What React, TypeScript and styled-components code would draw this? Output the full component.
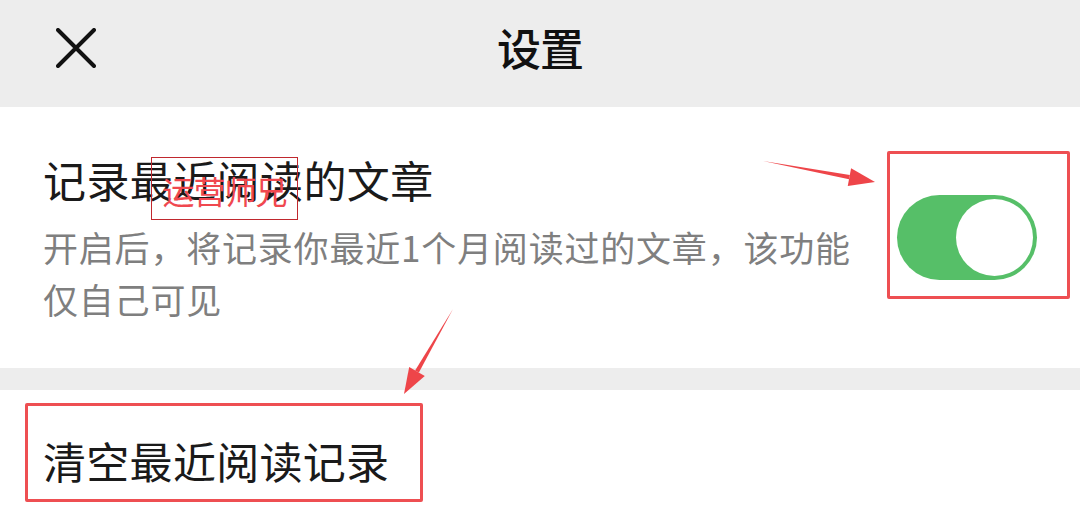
import React from "react";
import styled, { createGlobalStyle } from "styled-components";

const GlobalStyle = createGlobalStyle`
  html, body {
    margin: 0;
    padding: 0;
    background: #ededed;
  }
  body {
    font-family: "Noto Sans CJK SC", "Noto Sans", sans-serif;
    overflow: hidden;
  }
`;

const Page = styled.div`
  position: relative;
  width: 1080px;
  height: 515px;
  overflow: hidden;
  background: #ededed;
  display: flex;
  flex-direction: column;
  & > * {
    flex-shrink: 0;
  }
`;

const Header = styled.header`
  height: 107px;
  box-sizing: border-box;
  padding-bottom: 14px;
  display: grid;
  grid-template-columns: 1fr auto 1fr;
  align-items: center;
  background: #ededed;
`;

const CloseButton = styled.div`
  padding-left: 56px;
  padding-top: 3px;
  display: flex;
  align-items: center;
  color: #111;
`;

const HeaderTitle = styled.h1`
  margin: 0;
  font-size: 44px;
  line-height: 52px;
  font-weight: 500;
  color: #111;
  letter-spacing: -1px;
`;

const Section = styled.section<{ $height: number }>`
  background: #fff;
  height: ${(p) => p.$height}px;
  box-sizing: border-box;
  position: relative;
`;

const SettingRow = styled.div`
  height: 100%;
  display: flex;
  align-items: center;
  justify-content: space-between;
`;

const TextColumn = styled.div`
  align-self: flex-start;
  padding: 46px 0 0 43px;
  width: 830px;
`;

const TitleWrap = styled.div`
  position: relative;
`;

const RowTitle = styled.div`
  font-size: 43px;
  line-height: 52px;
  color: #1a1a1a;
  letter-spacing: 0.4px;
`;

const Description = styled.div`
  margin-top: 16px;
  font-size: 35px;
  line-height: 52px;
  color: #7f7f7f;
  letter-spacing: 0.8px;
`;

const Watermark = styled.div`
  position: absolute;
  left: 108px;
  top: 4px;
  width: 145px;
  height: 59px;
  border: 1px solid #c0282e;
  display: flex;
  align-items: center;
  justify-content: center;
  font-size: 32px;
  color: #f0484f;
  letter-spacing: -1px;
  padding-top: 2px;
`;

const ToggleFrame = styled.div`
  align-self: flex-start;
  margin-top: 44px;
  margin-right: 10px;
  padding: 41px 30px 16px 7px;
  border: 3px solid #ee4f52;
  border-radius: 2px;
`;

const Toggle = styled.div<{ $on: boolean }>`
  width: 140px;
  height: 85px;
  border-radius: 43px;
  background: ${(p) => (p.$on ? "#56bf68" : "#e5e5e5")};
  position: relative;
  box-sizing: border-box;
  padding: 4px 4px;
  display: flex;
  justify-content: ${(p) => (p.$on ? "flex-end" : "flex-start")};
`;

const Knob = styled.div`
  width: 77px;
  height: 77px;
  border-radius: 50%;
  background: #fff;
`;

const Gap = styled.div`
  height: 22px;
  background: #ededed;
`;

const ClearRow = styled.div`
  padding: 13px 0 0 25px;
`;

const HighlightBox = styled.div`
  display: inline-block;
  border: 3px solid #ee4f52;
  border-radius: 2px;
  padding: 28px 31px 13px 15px;
`;

const ClearText = styled.div`
  font-size: 43px;
  line-height: 52px;
  color: #1a1a1a;
  letter-spacing: 0.3px;
`;

const Annotations = styled.svg`
  position: absolute;
  left: 0;
  top: 0;
  pointer-events: none;
`;

const CloseIcon = () => (
  <svg width="40" height="40" viewBox="0 0 40 40">
    <path
      d="M2 2 L38 38 M38 2 L2 38"
      stroke="#111"
      strokeWidth="4"
      strokeLinecap="round"
    />
  </svg>
);

function arrowHead(x1: number, y1: number, x2: number, y2: number) {
  const dx = x2 - x1;
  const dy = y2 - y1;
  const len = Math.hypot(dx, dy);
  const ux = dx / len;
  const uy = dy / len;
  const hl = 26;
  const hw = 9;
  const bx = x2 - ux * hl;
  const by = y2 - uy * hl;
  const px = -uy;
  const py = ux;
  return {
    head: `${x2},${y2} ${bx + px * hw},${by + py * hw} ${bx - px * hw},${by - py * hw}`,
    sx: bx,
    sy: by,
  };
}

const Arrow = ({ x1, y1, x2, y2 }: { x1: number; y1: number; x2: number; y2: number }) => {
  const a = arrowHead(x1, y1, x2, y2);
  const dx = a.sx - x1;
  const dy = a.sy - y1;
  const len = Math.hypot(dx, dy);
  const px = (-dy / len) * 2.2;
  const py = (dx / len) * 2.2;
  const shaft = `${x1},${y1} ${a.sx + px},${a.sy + py} ${a.sx - px},${a.sy - py}`;
  return (
    <g fill="#ee4549">
      <polygon points={shaft} />
      <polygon points={a.head} />
    </g>
  );
};

export default function App() {
  return (
    <Page>
      <GlobalStyle />
      <Header>
        <CloseButton>
          <CloseIcon />
        </CloseButton>
        <HeaderTitle>设置</HeaderTitle>
        <div />
      </Header>
      <Section $height={261}>
        <SettingRow>
          <TextColumn>
            <TitleWrap>
              <RowTitle>记录最近阅读的文章</RowTitle>
              <Watermark>运营师兄</Watermark>
            </TitleWrap>
            <Description>
              开启后，将记录你最近1个月阅读过的文章，该功能仅自己可见
            </Description>
          </TextColumn>
          <ToggleFrame>
            <Toggle $on>
              <Knob />
            </Toggle>
          </ToggleFrame>
        </SettingRow>
      </Section>
      <Gap />
      <Section $height={200}>
        <ClearRow>
          <HighlightBox>
            <ClearText>清空最近阅读记录</ClearText>
          </HighlightBox>
        </ClearRow>
      </Section>
      <Annotations width="1080" height="515" viewBox="0 0 1080 515">
        <Arrow x1={763} y1={161} x2={875} y2={182} />
        <Arrow x1={453} y1={309} x2={404} y2={394} />
      </Annotations>
    </Page>
  );
}
